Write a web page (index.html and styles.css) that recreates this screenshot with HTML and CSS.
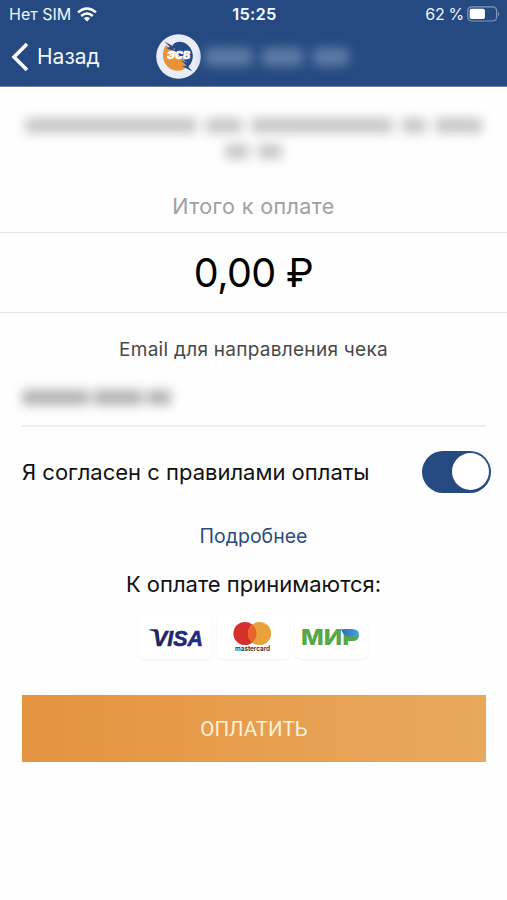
FILE: index.html
```html
<!DOCTYPE html>
<html lang="ru">
<head>
<meta charset="utf-8">
<title>Оплата</title>
<link rel="stylesheet" href="styles.css">
</head>
<body>
<header class="top">
  <div class="status">
    <div class="carrier"><span>Нет SIM</span>
      <svg width="20" height="15" viewBox="0 0 20 15" fill="none" stroke="#fff" stroke-width="2.5"><path d="M1 5.4Q10-2.4 19 5.4M4.2 9Q10 4.1 15.8 9"/><path d="M6.8 11.3Q10 8.7 13.2 11.3L10 14.6Z" fill="#fff" stroke="none"/></svg>
    </div>
    <div class="time">15:25</div>
    <div class="power"><span>62 %</span>
      <svg width="33" height="16" viewBox="0 0 33 16"><rect x=".8" y=".8" width="28.8" height="14.2" rx="4" fill="none" stroke="#8298bd" stroke-width="1.2"/><rect x="2.7" y="2.7" width="15.2" height="10.4" rx="1.8" fill="#fff"/><path d="M31 5.5Q33.4 8 31 10.5Z" fill="#8298bd"/></svg>
    </div>
  </div>
  <nav class="nav">
    <div class="back">
      <svg width="18" height="30" viewBox="0 0 18 30" fill="none" stroke="#fff" stroke-width="3.6"><path d="M16 2L3 15L16 28"/></svg>
      <span>Назад</span>
    </div>
    <div class="account">
      <svg width="46" height="46" viewBox="0 0 46 46"><circle cx="22.500" cy="22.500" r="22.300" fill="#e9edf7"/><path d="M10 11C4 20 7 32 17 36C23 38 28 36 32 32L26 25L18 18Z" fill="#e99136"/><path d="M16.500 11C22 5 31 8 35 15C38 21 37 26 34 31L26 25L20 18Z" fill="#244b83"/><path d="M8.500 7.500L18.500 13L17.500 15L25 19.500L10 14L14 13ZM25 26L34 30L32.500 33L36.500 37.500L26 32L31 32Z" fill="#244b83"/><text x="11" y="24.800" class="logo-text" textLength="23" lengthAdjust="spacingAndGlyphs">ЭСВ</text></svg>
      <div class="veil veil-account"><i class="w47"></i><i class="w41"></i><i class="w36"></i></div>
    </div>
  </nav>
</header>
<main>
  <div class="address">
    <div class="veil"><i class="w168"></i><i class="w36"></i><i class="w138"></i><i class="w24"></i><i class="w47"></i></div>
    <div class="veil"><i class="w24"></i><i class="w24"></i></div>
  </div>
  <div class="total-label"><span>Итого к оплате</span></div>
  <div class="amount"><span>0,00 ₽</span></div>
  <div class="email-label"><span>Email для направления чека</span></div>
  <div class="email"><div class="veil veil-email"><i class="w67"></i><i class="w50"></i><i class="w24"></i></div></div>
  <div class="agree"><span>Я согласен с правилами оплаты</span><div class="toggle"><b></b></div></div>
  <div class="more"><span>Подробнее</span></div>
  <div class="accept"><span>К оплате принимаются:</span></div>
  <div class="cards">
    <div class="card"><svg width="73" height="45" viewBox="0 0 73 45"><defs><linearGradient id="v"><stop stop-color="#1c2357"/><stop offset="1" stop-color="#242b91"/></linearGradient></defs><text x="14" y="30.500" class="visa" textLength="50" lengthAdjust="spacingAndGlyphs">VISA</text><path d="M10.500 14.300H18.500L20 21Q17 16 10.500 15.200Z" fill="#20275f"/></svg></div>
    <div class="card"><svg width="73" height="45" viewBox="0 0 73 45"><circle cx="28" cy="18.500" r="11.600" fill="#d5302b"/><circle cx="42.500" cy="18.500" r="11.600" fill="#e9a13b"/><path d="M35.250 9.500A11.600 11.600 0 0 1 35.250 27.500A11.600 11.600 0 0 1 35.250 9.500Z" fill="#e8642a"/><text x="18" y="36" class="mc" textLength="35" lengthAdjust="spacingAndGlyphs">mastercard</text></svg></div>
    <div class="card"><svg width="73" height="45" viewBox="0 0 73 45"><defs><linearGradient id="m"><stop stop-color="#2868b8"/><stop offset="1" stop-color="#4aa5dc"/></linearGradient></defs><text x="6" y="30" class="mir" textLength="57" lengthAdjust="spacingAndGlyphs">МИР</text><path d="M52 21H64Q63 26 58 26H52Z" fill="#55a747"/><path d="M46 14.300H58Q65 14.500 64 21.500H53Q48 20.500 46 14.300Z" fill="url(#m)"/></svg></div>
  </div>
  <button class="pay"><span>ОПЛАТИТЬ</span></button>
</main>
</body>
</html>
```
FILE: styles.css
```css
* { box-sizing: border-box; }
body { margin: 0; width: 507px; height: 900px; overflow: hidden; background: #fefefe; color: #111; font-family: Inter, "Liberation Sans", sans-serif; }
svg { display: block; flex: none; }
span { white-space: nowrap; }
.top { height: 87px; background: #254a82; border-bottom: 1px solid #687e9f; color: #f2f6ff; }
.status { height: 28px; display: grid; grid-template-columns: 1fr auto 1fr; align-items: center; padding: 0 7px 0 9px; font-size: 16px; }
.carrier, .power, .back, .account { display: flex; align-items: center; }
.carrier { gap: 6px; font-size: 16px; }
.time { font-weight: 600; font-size: 16.5px; letter-spacing: .2px; }
.power { justify-content: flex-end; gap: 3px; }
.power span { letter-spacing: -.3px; }
.nav { height: 57px; display: flex; align-items: center; padding-left: 11px; }
.back { width: 145px; gap: 8px; font-size: 21px; }
.account { gap: 3px; }
.logo-text { font: italic 900 10px Inter, sans-serif; fill: #fff; stroke: #fff; stroke-width: .4px; }
.veil { display: flex; justify-content: center; gap: 9px; height: 15px; filter: blur(5.5px); }
.veil i { background: #c6c6c6; border-radius: 4px; }
.veil-account { height: 18px; gap: 10px; justify-content: flex-start; }
.veil-account i { background: #5f7ca7; }
.veil-email { justify-content: flex-start; gap: 4px; height: 15px; }
.veil-email i { background: #b2b2b2; }
.w24 { width: 24px; } .w36 { width: 36px; } .w41 { width: 41px; } .w47 { width: 47px; } .w50 { width: 50px; } .w67 { width: 67px; } .w138 { width: 142px; } .w168 { width: 172px; }
.address { height: 92px; padding-top: 31px; display: flex; flex-direction: column; gap: 11px; }
.total-label, .amount, .email-label, .more, .accept { display: flex; align-items: center; justify-content: center; }
.total-label { height: 54px; color: #a0a0a0; font-size: 21.5px; letter-spacing: .4px; border-bottom: 1px solid #e2e2e2; }
.amount { height: 80px; font-size: 39.5px; letter-spacing: -.6px; color: #000; border-bottom: 1px solid #e2e2e2; }
.email-label { height: 72px; font-size: 19px; letter-spacing: .28px; color: #484848; }
.email { height: 42px; margin: 0 21px 0 22px; padding-top: 5px; border-bottom: 2px solid #eee; }
.agree { height: 90px; padding: 0 16px 0 22px; display: flex; align-items: center; justify-content: space-between; font-size: 22px; }
.toggle { width: 69px; height: 42px; padding: 2px; border-radius: 21px; background: #254a82; display: flex; justify-content: flex-end; }
.toggle b { width: 37px; height: 37px; border-radius: 50%; background: #fff; }
.more { height: 38px; color: #2b4c7c; font-size: 19.5px; }
.accept { height: 58px; font-size: 22px; }
.cards { height: 47px; padding: 2px 0 0 139px; display: flex; gap: 5px; }
.card { width: 73px; height: 44px; border-radius: 6px; background: #fff; box-shadow: 0 1px 2px #f0f0f0; }
.visa { font: italic 700 22.5px "Liberation Sans", sans-serif; fill: url(#v); stroke: url(#v); stroke-width: .6px; }
.mc { font: 600 7px Inter, sans-serif; fill: #29272a; }
.mir { font: 800 22px Inter, sans-serif; fill: #55a747; }
.pay { display: flex; align-items: center; justify-content: center; width: 464px; height: 67px; margin: 35px 0 0 22px; border: 0; color: #fff1d8; font: 20.5px Roboto, sans-serif; background: linear-gradient(90deg, #e5933f, #e8a95d); }
```
